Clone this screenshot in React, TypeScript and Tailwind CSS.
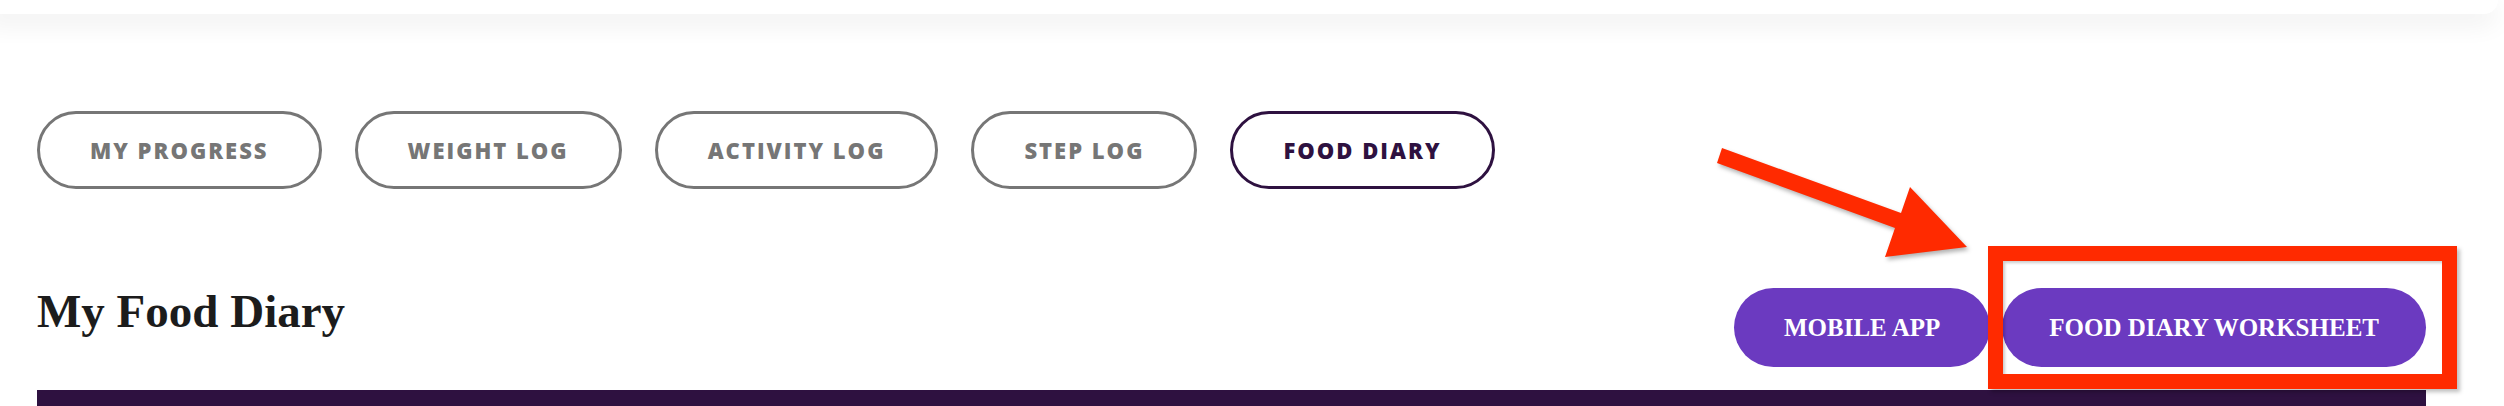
import React from "react";

const pills = [
  { label: "MY PROGRESS", active: false },
  { label: "WEIGHT LOG", active: false },
  { label: "ACTIVITY LOG", active: false },
  { label: "STEP LOG", active: false },
  { label: "FOOD DIARY", active: true },
];

export default function App() {
  return (
    <div className="relative w-[2504px] h-[406px] overflow-hidden bg-white">
      <div className="ml-[-20px] w-[2518px] h-[14px] bg-white rounded-b-[18px] shadow-[0_8px_26px_rgba(0,0,0,0.09)]" />

      <div className="pl-[37px] pt-[97px] flex gap-[33px]">
        {pills.map((p) =>
          p.active ? (
            <div
              key={p.label}
              className="h-[78px] px-[50px] flex items-center rounded-full border-[3px] border-[#2e1140] text-[#2e1140] font-['Open_Sans',sans-serif] font-extrabold text-[22px] tracking-[2px]"
            >
              {p.label}
            </div>
          ) : (
            <div
              key={p.label}
              className="h-[78px] px-[50px] flex items-center rounded-full border-[3px] border-[#767676] text-[#767676] font-['Open_Sans',sans-serif] font-extrabold text-[22px] tracking-[2px]"
            >
              {p.label}
            </div>
          )
        )}
      </div>

      <div className="ml-[37px] w-[2389px] mt-[99px] flex justify-between items-start">
        <h1 className="font-['Liberation_Serif',serif] font-bold text-[47px] leading-none text-[#1c1c1c]">
          My Food Diary
        </h1>
        <div className="flex gap-[12px]">
          <div className="h-[79px] px-[50px] flex items-center rounded-full bg-[#6b3ac0] text-white font-['Liberation_Serif',serif] font-bold text-[25px]">
            MOBILE APP
          </div>
          <div className="h-[79px] px-[47px] flex items-center rounded-full bg-[#6b3ac0] text-white font-['Liberation_Serif',serif] font-bold text-[25px]">
            FOOD DIARY WORKSHEET
          </div>
        </div>
      </div>

      <div className="ml-[37px] w-[2389px] mt-[23px] h-[40px] bg-[#2e1140]" />

      <div className="absolute left-[1988px] top-[246px] w-[469px] h-[143px] border-[15px] border-[#ff2a00] shadow-[3px_3px_4px_rgba(0,0,0,0.25),inset_2px_2px_3px_rgba(0,0,0,0.2)]" />

      <svg
        className="absolute left-[1700px] top-[130px] drop-shadow-[2px_3px_2px_rgba(0,0,0,0.3)]"
        width="300"
        height="150"
        viewBox="0 0 300 150"
      >
        <polygon
          points="22,18 201,83 210,57 267,117 185,127 195,98 17,33"
          fill="#ff2a00"
        />
      </svg>
    </div>
  );
}
